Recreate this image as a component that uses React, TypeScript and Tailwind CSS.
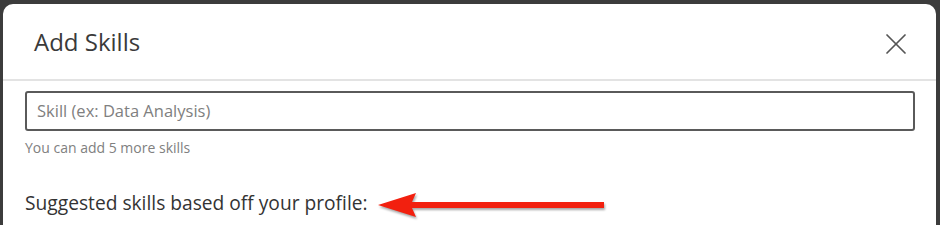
import { X } from 'lucide-react'

function Arrow() {
  return (
    <svg width="232" height="30" viewBox="0 0 232 30" className="drop-shadow-[1px_2px_1px_rgba(0,0,0,0.35)]">
      <path d="M2 15 L40 3 L36 12 L228 12 L228 18 L36 18 L40 27 Z" fill="#f2200f" />
    </svg>
  )
}

export default function App() {
  return (
    <div className="h-[225px] w-[940px] overflow-hidden bg-[#3c3c3c] pt-[4px] pl-[3px] pr-[4px]">
      <div
        className="h-[260px] rounded-t-[10px] bg-white"
        style={{ fontFamily: '"Open Sans", "Noto Sans", sans-serif' }}
      >
        <div className="flex h-[77px] items-center justify-between border-b-2 border-[#e3e3e3] pl-[31px] pr-[22px]">
          <h2 className="text-[24px] text-[#3a3a3a]">Add Skills</h2>
          <X className="mt-[5px] h-[36px] w-[36px] text-[#555]" strokeWidth={1.15} />
        </div>
        <div className="px-[22px] pt-[10px]">
          <div className="mr-[-1px] flex h-[40px] items-center rounded-[3px] border-2 border-[#5a5a5a] px-[10px]">
            <span className="text-[16.5px] text-[#808080]">Skill (ex: Data Analysis)</span>
          </div>
          <p className="mt-[6px] text-[14px] text-[#808080]">You can add 5 more skills</p>
          <div className="mt-[28px] flex items-center">
            <span className="text-[19.2px] text-[#333]">Suggested skills based off your profile:</span>
            <span className="ml-[8px] mt-[4px]">
              <Arrow />
            </span>
          </div>
        </div>
      </div>
    </div>
  )
}
